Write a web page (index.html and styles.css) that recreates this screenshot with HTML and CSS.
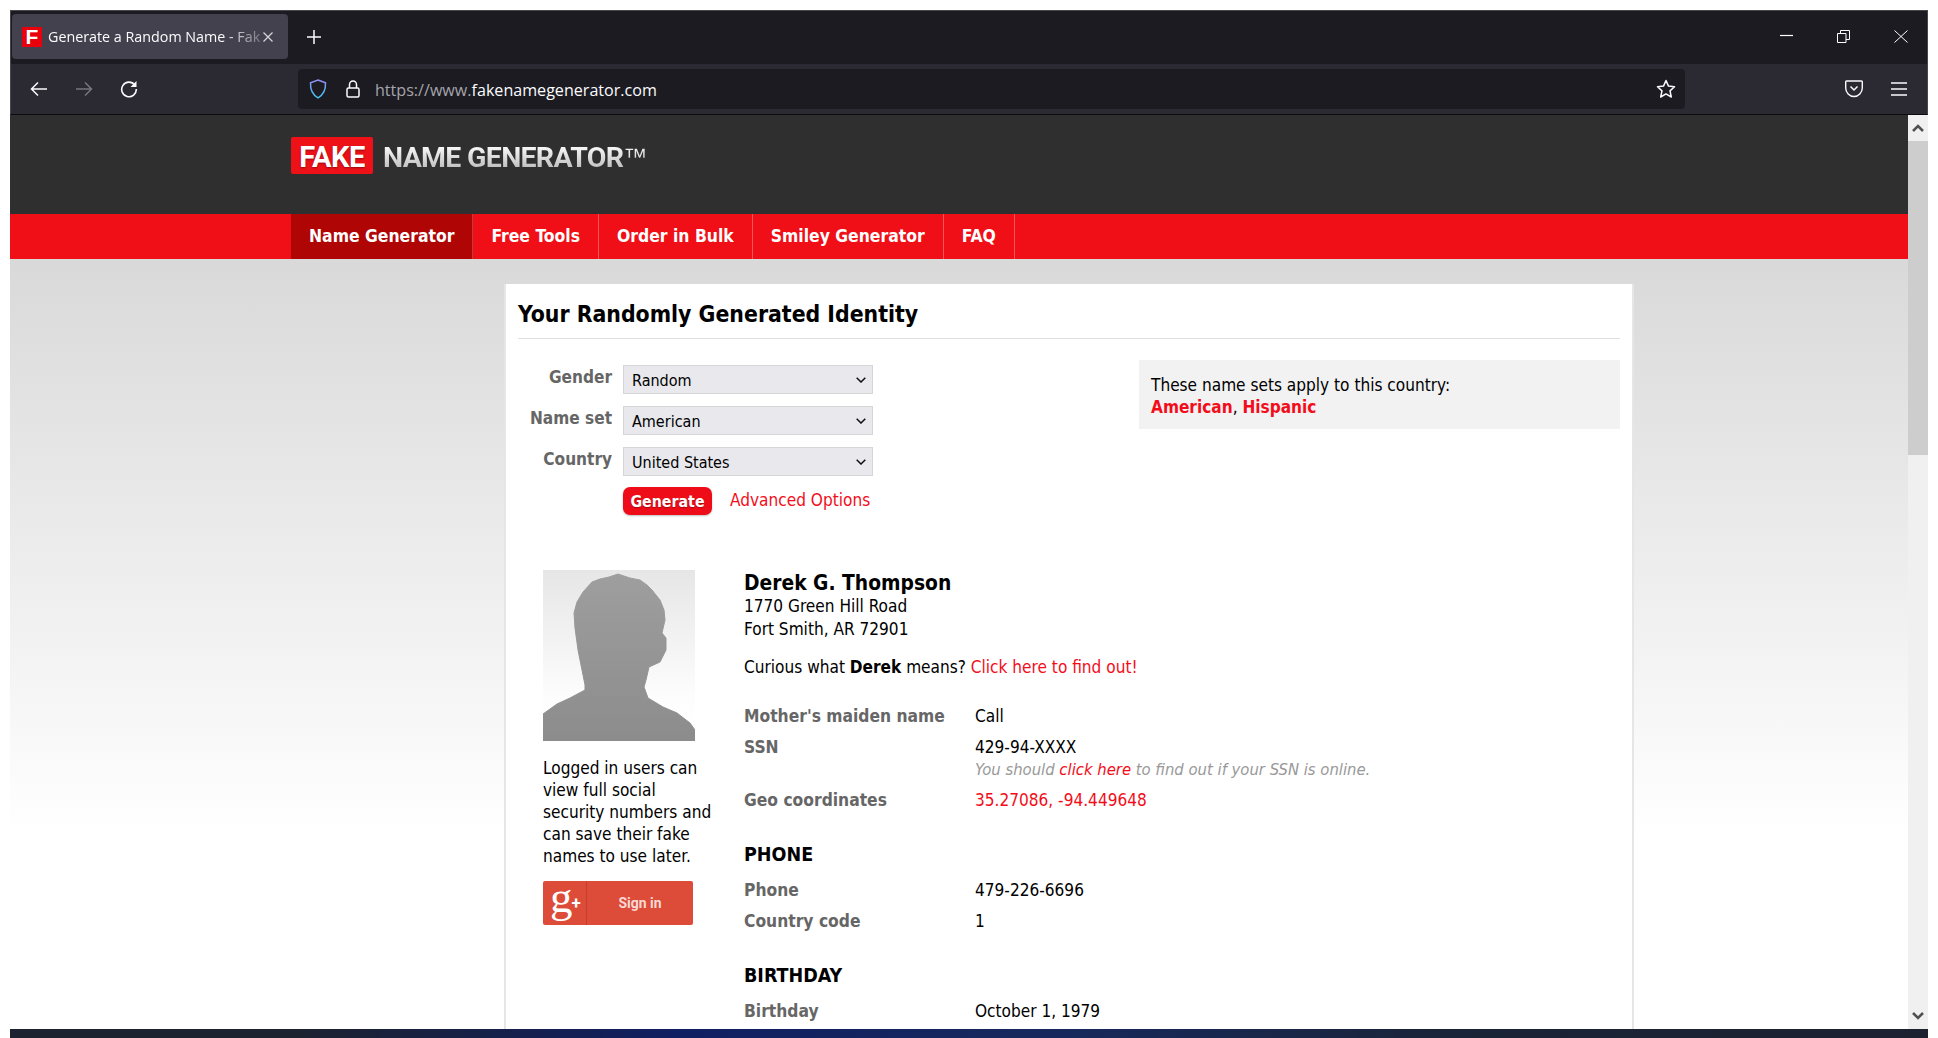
FILE: index.html
```html
<!DOCTYPE html>
<html lang="en">
<head>
    <meta charset="UTF-8">
    <meta name="viewport" content="width=device-width, initial-scale=1.0">
    <title>Generate a Random Name - Fake Name Generator</title>
    <link rel="stylesheet" href="styles.css">
</head>
<body>
    <div class="window">
        <div class="tabbar">
            <div class="tab">
                <span class="favicon">F</span>
                <span class="tab-title">Generate a Random Name - Fak</span>
                <svg class="tab-close" width="12" height="12" viewBox="0 0 12 12"><path d="M1.5 1.5l9 9M10.5 1.5l-9 9" stroke="#d8d8dc" stroke-width="1.2" fill="none"/></svg>
            </div>
            <svg class="new-tab" width="16" height="16" viewBox="0 0 16 16"><path d="M8 1v14M1 8h14" stroke="#fbfbfe" stroke-width="1.5" fill="none"/></svg>
            <div class="win-controls">
                <svg width="13" height="13" viewBox="0 0 13 13"><path d="M0 5.5h13" stroke="#fff" stroke-width="1.2" fill="none"/></svg>
                <svg width="13" height="13" viewBox="0 0 13 13"><path d="M.5 3.5h8.500v9h-8.500zM3.500 3.500v-3h9v9h-3.500" stroke="#fff" fill="none"/></svg>
                <svg width="14" height="13" viewBox="0 0 14 13"><path d="M.5.5l13 12M13.500.5l-13 12" stroke="#fff" fill="none"/></svg>
            </div>
        </div>
        <div class="toolbar">
            <svg class="nav-icon" width="18" height="16" viewBox="0 0 18 16"><path d="M17 8H1.500M8 1.500L1.500 8 8 14.500" stroke="#fbfbfe" stroke-width="1.500" fill="none"/></svg>
            <svg class="nav-icon" width="18" height="16" viewBox="0 0 18 16"><path d="M1 8h15.500M10 1.500L16.500 8 10 14.500" stroke="#77767c" stroke-width="1.500" fill="none"/></svg>
            <svg class="nav-icon" width="18" height="18" viewBox="0 0 18 18"><path d="M14.800 5A7.300 7.300 0 1 0 16.300 9" stroke="#fbfbfe" stroke-width="1.600" fill="none"/><path d="M16.500 1v6h-6z" fill="#fbfbfe"/></svg>
            <div class="urlbar">
                <svg width="18" height="20" viewBox="0 0 18 20"><defs><linearGradient id="shieldGrad" x1="0" y1="0" x2="0" y2="1"><stop offset="0" stop-color="#8f8ff5"/><stop offset="1" stop-color="#3fc4f0"/></linearGradient></defs><path d="M9 1l7.500 2.800c.3 7-1.800 12-7.500 15-5.700-3-7.800-8-7.500-15z" stroke="url(#shieldGrad)" stroke-width="1.500" fill="none"/></svg>
                <svg class="lock" width="14" height="18" viewBox="0 0 14 18"><path d="M3.500 8V4.500a3.500 3.500 0 0 1 7 0V8" stroke="#fbfbfe" stroke-width="1.500" fill="none"/><rect x="1" y="8" width="12" height="9" rx="1.500" stroke="#fbfbfe" stroke-width="1.500" fill="none"/></svg>
                <span class="url">https://www.<b>fakenamegenerator.com</b></span>
                <svg class="star" width="20" height="20" viewBox="0 0 20 20"><path d="M10 1.500l2.500 5.600 6 .7-4.500 4.100 1.300 6.100-5.300-3.100-5.300 3.100 1.300-6.100-4.500-4.100 6-.7z" stroke="#fbfbfe" stroke-width="1.500" stroke-linejoin="round" fill="none"/></svg>
            </div>
            <svg class="pocket" width="18" height="18" viewBox="0 0 18 18"><path d="M1.500 1h15a.8.8 0 0 1 .8.8V8c0 4.500-3.800 8.500-8.300 8.500S.7 12.500.7 8V1.800a.8.8 0 0 1 .8-.8z" stroke="#fbfbfe" stroke-width="1.400" fill="none"/><path d="M5.500 6.500L9 10l3.500-3.500" stroke="#fbfbfe" stroke-width="1.500" fill="none"/></svg>
            <svg class="menu" width="16" height="14" viewBox="0 0 16 14"><path d="M0 1h16M0 7h16M0 13h16" stroke="#fbfbfe" stroke-width="1.500" fill="none"/></svg>
        </div>
        <div class="viewport">
            <div class="page">
                <div class="site-header">
                    <div class="logo">
                        <span class="logo-fake">FAKE</span>
                        <span class="logo-name">NAME GENERATOR<span class="tm">™</span></span>
                    </div>
                </div>
                <ul class="site-nav">
                    <li class="active">Name Generator</li>
                    <li>Free Tools</li>
                    <li>Order in Bulk</li>
                    <li>Smiley Generator</li>
                    <li>FAQ</li>
                </ul>
                <div class="card">
                    <h2 class="card-title">Your Randomly Generated Identity</h2>
                    <div class="options">
                        <form class="gen-form">
                            <label for="gender">Gender</label>
                            <div class="select-wrap">
                                <select id="gender"><option>Random</option></select>
                                <svg class="chevron" width="10" height="6" viewBox="0 0 10 6"><path d="M.7.7L5 5l4.300-4.300" stroke="#111" stroke-width="1.500" fill="none"/></svg>
                            </div>
                            <label for="nameset">Name set</label>
                            <div class="select-wrap">
                                <select id="nameset"><option>American</option></select>
                                <svg class="chevron" width="10" height="6" viewBox="0 0 10 6"><path d="M.7.7L5 5l4.300-4.300" stroke="#111" stroke-width="1.500" fill="none"/></svg>
                            </div>
                            <label for="country">Country</label>
                            <div class="select-wrap">
                                <select id="country"><option>United States</option></select>
                                <svg class="chevron" width="10" height="6" viewBox="0 0 10 6"><path d="M.7.7L5 5l4.300-4.300" stroke="#111" stroke-width="1.500" fill="none"/></svg>
                            </div>
                            <div class="form-actions">
                                <button type="button" class="generate">Generate</button>
                                <a class="link adv-link">Advanced Options</a>
                            </div>
                        </form>
                        <div class="name-sets">
                            These name sets apply to this country:<br>
                            <a class="link"><b>American</b></a>, <a class="link"><b>Hispanic</b></a>
                        </div>
                    </div>
                    <div class="identity">
                        <div class="side">
                            <svg class="avatar" width="152" height="171" viewBox="0 0 152 171">
                                <defs>
                                    <linearGradient id="avatarBg" x1="0" y1="0" x2="0" y2="1"><stop offset="0" stop-color="#e6e6e6"/><stop offset=".75" stop-color="#fdfdfd"/><stop offset="1" stop-color="#fff"/></linearGradient>
                                    <linearGradient id="avatarFg" x1="0" y1="0" x2="0" y2="1"><stop offset="0" stop-color="#9e9e9e"/><stop offset="1" stop-color="#8c8c8c"/></linearGradient>
                                </defs>
                                <rect width="152" height="171" fill="url(#avatarBg)"/>
                                <path d="M0 144L14 134 27 128 42 120 42 115 39 100 35 80 32 58 31 43 34 32 40 22 49 12 57 9 66 7 75 4 87 8 97 10 104 15 109 20 117 30 121 40 122 50 119 63 123 68 123 80 117 92 106 97 103 110 101 117 105 128 120 137 134 143 147 153 152 160V171H0Z" fill="url(#avatarFg)" stroke="url(#avatarFg)" stroke-linejoin="round"/>
                            </svg>
                            <p class="side-text">Logged in users can view full social security numbers and can save their fake names to use later.</p>
                            <div class="gplus">
                                <span class="gplus-mark"><span class="gplus-g">g</span><span class="gplus-plus">+</span></span>
                                <span class="gplus-label">Sign in</span>
                            </div>
                        </div>
                        <div class="details">
                            <h3 class="person">Derek G. Thompson</h3>
                            <div class="address">1770 Green Hill Road<br>Fort Smith, AR 72901</div>
                            <p class="curious">Curious what <b>Derek</b> means? <a class="link">Click here to find out!</a></p>

                            <div class="row first"><span class="row-label">Mother's maiden name</span><span>Call</span></div>
                            <div class="row"><span class="row-label">SSN</span><span>429-94-XXXX<br><em class="hint">You should <a class="link">click here</a> to find out if your SSN is online.</em></span></div>
                            <div class="row"><span class="row-label">Geo coordinates</span><a class="link">35.27086, -94.449648</a></div>

                            <h3 class="section">PHONE</h3>
                            <div class="row"><span class="row-label">Phone</span><span>479-226-6696</span></div>
                            <div class="row"><span class="row-label">Country code</span><span>1</span></div>

                            <h3 class="section">BIRTHDAY</h3>
                            <div class="row"><span class="row-label">Birthday</span><span>October 1, 1979</span></div>
                        </div>
                    </div>
                </div>
            </div>
            <div class="scrollbar">
                <div class="scroll-btn"><svg width="14" height="10" viewBox="0 0 14 10"><path d="M2 8l5-5 5 5" stroke="#505050" stroke-width="2.500" fill="none"/></svg></div>
                <div class="scroll-thumb"></div>
                <div class="scroll-track"></div>
                <div class="scroll-btn"><svg width="14" height="10" viewBox="0 0 14 10"><path d="M2 2l5 5 5-5" stroke="#505050" stroke-width="2.500" fill="none"/></svg></div>
            </div>
        </div>
        <div class="taskbar"></div>
    </div>
</body>
</html>
```

FILE: styles.css
```css
html, body {
    margin: 0;
    padding: 0;
    height: 100%;
    overflow: hidden;
}
body {
    box-sizing: border-box;
    padding: 10px 10px 0 10px;
    background: white;
    font-family: "DejaVu Sans Condensed", "DejaVu Sans", sans-serif;
    font-size: 17.1px;
    color: black;
}
.window {
    display: flex;
    flex-direction: column;
    height: 1028px;
}

/* browser chrome */
.tabbar {
    display: flex;
    align-items: flex-start;
    flex: none;
    box-sizing: border-box;
    height: 54px;
    padding: 3px 0 0 1px;
    background: #1c1b22;
    border: 1px solid #47474c;
    border-bottom: none;
    font-family: "Open Sans", sans-serif;
}
.tab {
    display: flex;
    align-items: center;
    box-sizing: border-box;
    width: 276px;
    height: 45px;
    padding: 0 15px 0 10px;
    background: #42414d;
    border-radius: 4px;
    color: #fbfbfe;
    font-size: 14.3px;
}
.favicon {
    flex: none;
    width: 20px;
    height: 20px;
    margin-right: 6px;
    background: #e8000d;
    color: white;
    font: bold 21px/20px "Liberation Sans", sans-serif;
    text-align: center;
}
.tab-title {
    flex: 1;
    white-space: nowrap;
    -webkit-mask-image: linear-gradient(to right, black 82%, rgba(0,0,0,0.3) 100%);
    mask-image: linear-gradient(to right, black 82%, rgba(0,0,0,0.3) 100%);
}
.tab-close {
    flex: none;
    margin-left: 2px;
}
.new-tab {
    margin: 15px 0 0 18px;
}
.win-controls {
    display: flex;
    align-items: center;
    gap: 44px;
    height: 32px;
    margin: 6px 19px 0 auto;
}
.toolbar {
    display: flex;
    align-items: center;
    flex: none;
    box-sizing: border-box;
    height: 51px;
    padding-left: 19px;
    padding-bottom: 1px;
    background: #2b2a33;
    border-left: 1px solid #47474c;
    border-right: 1px solid #47474c;
    border-bottom: 1px solid #0c0c0d;
}
.nav-icon {
    margin-right: 27px;
}
.urlbar {
    display: flex;
    align-items: center;
    box-sizing: border-box;
    width: 1387px;
    height: 40px;
    margin-left: 133px;
    padding: 0 9px 0 11px;
    background: #1c1b22;
    border-radius: 4px;
}
.lock {
    margin-left: 19px;
}
.url {
    margin: 2px 0 0 15px;
    color: #a5a5ab;
    font-family: "Open Sans", sans-serif;
    font-size: 16.1px;
}
.url b {
    color: #fbfbfe;
    font-weight: normal;
}
.star {
    margin-left: auto;
}
.pocket {
    margin-left: 160px;
}
.menu {
    margin-left: 28px;
}
.taskbar {
    flex: none;
    height: 9px;
    background: linear-gradient(to right, #1c2230 0%, #1c2230 15%, #101f62 35%, #17295c 55%, #1a2438 75%, #1c2230 100%);
}

/* page area */
.viewport {
    display: flex;
    flex: 1;
    min-height: 0;
}
.page {
    flex: 1;
    min-width: 0;
    overflow: hidden;
    background: linear-gradient(to bottom, #d9d9d9 0, #d9d9d9 144px, white 720px);
}
.scrollbar {
    display: flex;
    flex-direction: column;
    flex: none;
    width: 20px;
    background: #f0f0f0;
}
.scroll-btn {
    display: flex;
    align-items: center;
    justify-content: center;
    flex: none;
    height: 26px;
}
.scroll-thumb {
    flex: none;
    height: 314px;
    background: #cdcdcd;
}
.scroll-track {
    flex: 1;
}
.site-header {
    height: 99px;
    background: #2f2f2f;
}
.logo {
    display: flex;
    align-items: center;
    padding: 22px 0 0 281px;
    font-family: Roboto, sans-serif;
}
.logo-fake {
    box-sizing: border-box;
    width: 82px;
    height: 37px;
    background: #ee1118;
    border-radius: 2px;
    color: white;
    font-size: 29px;
    font-weight: 700;
    letter-spacing: -0.5px;
    line-height: 40px;
    text-align: center;
    text-shadow: 0 1px 2px rgba(0,0,0,0.4);
}
.logo-name {
    margin: 3px 0 0 10px;
    background: linear-gradient(to bottom, #fafafa 15%, #bdbdbd 85%);
    -webkit-background-clip: text;
    background-clip: text;
    color: transparent;
    font-size: 28.5px;
    font-weight: 700;
    letter-spacing: -0.7px;
    white-space: nowrap;
}
.tm {
    font-family: "Liberation Sans", sans-serif;
    font-size: 24px;
    font-weight: normal;
    line-height: 0;
    vertical-align: 2px;
}
.site-nav {
    display: flex;
    height: 45px;
    margin: 0;
    padding: 0 0 0 281px;
    background: #f00f16;
    list-style: none;
}
.site-nav li {
    padding: 0 18px;
    border-right: 1px solid #f6565b;
    color: white;
    font-size: 17.4px;
    font-weight: bold;
    line-height: 45px;
}
.site-nav li.active {
    background: #b00505;
    border-right-color: #c23c3c;
}
.card {
    box-sizing: border-box;
    width: 1130px;
    margin: 25px 0 0 494px;
    padding: 0 12px 40px;
    background: white;
    border-left: 2px solid #e6e6e6;
    border-right: 2px solid #e6e6e6;
}
.card-title {
    margin: 0;
    padding: 15px 0 9px;
    border-bottom: 1px solid #dfdfdf;
    font-size: 22.8px;
    line-height: 30px;
}
.options {
    display: flex;
    justify-content: space-between;
    margin-top: 21px;
}
.gen-form {
    display: grid;
    grid-template-columns: 94px 250px;
    column-gap: 11px;
    row-gap: 12px;
    align-items: start;
    padding-top: 5px;
}
.gen-form label {
    color: #666;
    font-weight: bold;
    line-height: 25px;
    text-align: right;
    white-space: nowrap;
}
.select-wrap {
    position: relative;
    height: 29px;
}
.select-wrap select {
    display: block;
    box-sizing: border-box;
    width: 100%;
    height: 29px;
    padding: 1px 8px 0;
    background: #e8e8ed;
    border: 1px solid #d6d6d6;
    border-radius: 0;
    -webkit-appearance: none;
    appearance: none;
    color: black;
    font: 16px "DejaVu Sans Condensed", sans-serif;
}
.chevron {
    position: absolute;
    top: 12px;
    right: 7px;
}
.form-actions {
    display: flex;
    align-items: center;
    gap: 18px;
    grid-column: 2;
    margin-top: -1px;
}
.adv-link {
    margin-top: -2px;
}
.generate {
    width: 89px;
    height: 28px;
    padding: 0;
    background: #ee0c18;
    border: none;
    border-radius: 7px;
    box-shadow: 0 1px 2px rgba(0,0,0,0.25);
    color: white;
    font: bold 15.8px "DejaVu Sans Condensed", sans-serif;
    text-shadow: 0 1px 1px rgba(0,0,0,0.3);
}
.link {
    color: #f30d1a;
}
.name-sets {
    box-sizing: border-box;
    width: 481px;
    height: 69px;
    padding: 14px 12px 0;
    background: #f2f2f2;
    line-height: 22px;
}
.identity {
    display: flex;
    margin-top: 55px;
    padding-left: 25px;
}
.side {
    flex: none;
    width: 201px;
}
.avatar {
    display: block;
}
.side-text {
    width: 175px;
    margin: 16px 0 0;
    line-height: 22px;
}
.gplus {
    display: flex;
    width: 150px;
    height: 44px;
    margin-top: 14px;
    background: #dd4b39;
    border-radius: 2px;
    color: white;
}
.gplus-mark {
    display: flex;
    align-items: center;
    box-sizing: border-box;
    flex: none;
    width: 44px;
    padding-left: 7px;
    border-right: 1px solid #c23f2f;
}
.gplus-g {
    margin-top: -12px;
    font: 45px/36px "Liberation Serif", serif;
}
.gplus-plus {
    margin-left: -1px;
    font: bold 17px Roboto, sans-serif;
}
.gplus-label {
    flex: 1;
    color: #f8d8d3;
    font: bold 14px/44px Roboto, sans-serif;
    text-align: center;
}
.details {
    flex: 1;
    padding-top: 1px;
    line-height: 23px;
}
.person {
    margin: 0;
    font-size: 20.8px;
    line-height: 24px;
}
.curious {
    margin: 15px 0 0;
}
.row {
    display: grid;
    grid-template-columns: 231px 1fr;
    margin-top: 8px;
}
.row.first {
    margin-top: 26px;
}
.row-label {
    color: #666;
    font-size: 17.3px;
    font-weight: bold;
}
.hint {
    display: block;
    color: #999;
    font-size: 16.5px;
    line-height: 22px;
}
.section {
    margin: 31px 0 0;
    font-size: 19.5px;
    line-height: 23px;
}
.section + .row {
    margin-top: 13px;
}
```
